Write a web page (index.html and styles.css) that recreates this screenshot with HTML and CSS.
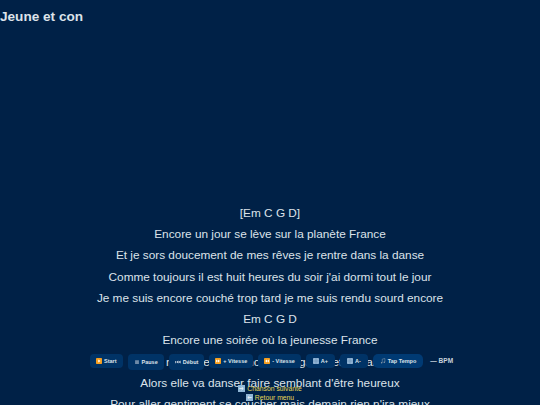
FILE: index.html
```html
<!DOCTYPE html>
<html lang="fr">
<head>
<meta charset="utf-8">
<title>Jeune et con</title>
<link rel="stylesheet" href="styles.css">
</head>
<body>
<h1 class="title">Jeune et con</h1>
<main class="lyrics">
<p>[Em C G D]</p>
<p>Encore un jour se lève sur la planète France</p>
<p>Et je sors doucement de mes rêves je rentre dans la danse</p>
<p>Comme toujours il est huit heures du soir j'ai dormi tout le jour</p>
<p>Je me suis encore couché trop tard je me suis rendu sourd encore</p>
<p>Em C G D</p>
<p>Encore une soirée où la jeunesse France</p>
<p>Se maquille en silence, se regarde et s'avance</p>
<p>Alors elle va danser faire semblant d'être heureux</p>
<p>Pour aller gentiment se coucher mais demain rien n'ira mieux</p>
</main>
<nav class="toolbar">
<button class="btn"><svg class="ico" viewBox="0 0 8 8"><rect width="8" height="8" rx="1" fill="#f59e1f"/><path d="M3 2l3 2-3 2z" fill="#fff"/></svg>Start</button>
<button class="btn tall"><svg class="ico" viewBox="0 0 8 8"><path d="M2 1.500h1.400v5H2zM4.600 1.500H6v5H4.600z" fill="#c8d3de"/></svg>Pause</button>
<button class="btn tall"><svg class="ico" viewBox="0 0 8 8"><path d="M0 2.500h1v3H0zM1.500 4l3-2v4zM4.500 4l3-2v4z" fill="#c8d3de"/></svg>Début</button>
<button class="btn"><svg class="ico" viewBox="0 0 8 8"><rect width="8" height="8" rx="1" fill="#f59e1f"/><path d="M1.500 2l2.500 2-2.500 2zM4 2l2.500 2L4 6z" fill="#fff"/></svg>+ Vitesse</button>
<button class="btn"><svg class="ico" viewBox="0 0 8 8"><rect width="8" height="8" rx="1" fill="#f59e1f"/><path d="M6.500 2L4 4l2.500 2zM4 2L1.500 4 4 6z" fill="#fff"/></svg>- Vitesse</button>
<button class="btn size"><svg class="ico" viewBox="0 0 8 8"><rect width="8" height="8" rx="1" fill="#8fb2d3"/><path d="M0 4h8M4 0v8" stroke="#5f86ad" stroke-width=".6"/></svg>A+</button>
<button class="btn size"><svg class="ico" viewBox="0 0 8 8"><rect width="8" height="8" rx="1" fill="#8fb2d3"/><path d="M0 4h8M4 0v8" stroke="#5f86ad" stroke-width=".6"/></svg>A-</button>
<button class="btn tap"><svg class="ico" viewBox="0 0 8 8"><path d="M3 6V1.500l3.500-.8V5.500" fill="none" stroke="#8c9cab" stroke-width=".7"/><circle cx="2.200" cy="6.200" r="1" fill="#8c9cab"/><circle cx="5.700" cy="5.600" r="1" fill="#8c9cab"/></svg>Tap Tempo</button>
<span class="bpm">— BPM</span>
</nav>
<div class="menu">
<a class="link"><svg class="ico small" viewBox="0 0 8 8"><rect width="8" height="8" fill="#8fb6d6"/><path d="M1.500 4h4M4 2.200L6 4 4 5.800" fill="none" stroke="#fff" stroke-width=".8"/></svg>Chanson suivante</a>
<a class="link"><svg class="ico small" viewBox="0 0 8 8"><rect width="8" height="8" fill="#8fb6d6"/><path d="M6.500 4h-4M4 2.200L2 4l2 1.800" fill="none" stroke="#fff" stroke-width=".8"/></svg>Retour menu</a>
</div>
</body>
</html>
```
FILE: styles.css
```css
html, body {
  margin: 0;
  height: 100%;
  overflow: hidden;
}
body {
  background: #002147;
  color: #dce3ea;
  font-family: "Liberation Sans", Arial, sans-serif;
}
.title {
  margin: 0;
  padding-top: 9px;
  font-size: 13.600px;
  line-height: 16px;
  font-weight: bold;
}
.lyrics {
  padding-top: 178px;
  text-align: center;
  font-size: 11.800px;
  line-height: 1.800;
}
.lyrics p {
  margin: 0;
}
.toolbar {
  position: absolute;
  left: 90px;
  top: 354px;
  display: flex;
  align-items: flex-start;
  gap: 5px;
}
.btn {
  display: flex;
  align-items: center;
  justify-content: center;
  gap: 2px;
  height: 14px;
  padding: 0 6px;
  border: 0;
  border-radius: 4px;
  background: #003366;
  color: #dce3ea;
  font: bold 5.500px "Liberation Sans", Arial, sans-serif;
  white-space: nowrap;
}
.btn.tall {
  height: 16px;
}
.btn.size {
  padding: 0 7px;
}
.btn.tap {
  padding: 0 7px;
  border-radius: 5px;
  background: #003a73;
}
.ico {
  width: 6px;
  height: 6px;
  flex: none;
}
.bpm {
  margin-left: 2px;
  margin-top: 2px;
  font-size: 6.500px;
  line-height: 10px;
  font-weight: bold;
  color: #c9d3dd;
  white-space: nowrap;
}
.menu {
  position: absolute;
  left: 0;
  right: 0;
  top: 383.500px;
  display: flex;
  flex-direction: column;
  align-items: center;
}
.link {
  display: flex;
  align-items: center;
  gap: 2px;
  font-size: 6.800px;
  line-height: 9px;
  color: #e6d858;
}
.small {
  width: 7px;
  height: 7px;
}
```
